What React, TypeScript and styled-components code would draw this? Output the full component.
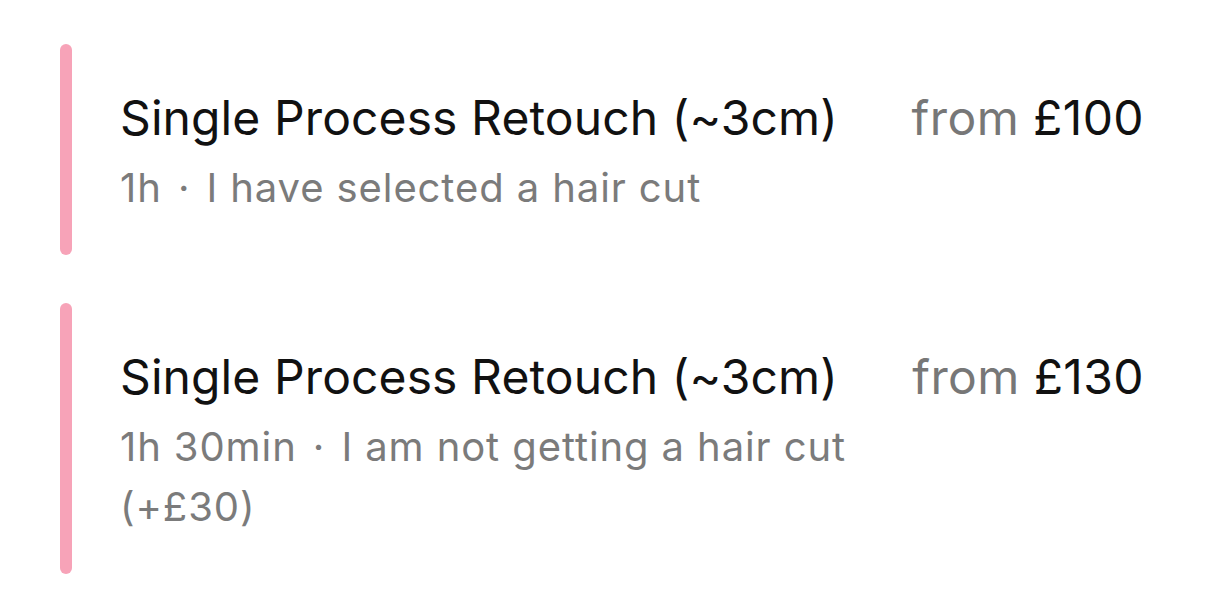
import React from 'react';
import styled, { createGlobalStyle } from 'styled-components';

const GlobalStyle = createGlobalStyle`
  body {
    margin: 0;
    background: #ffffff;
    font-family: Inter, 'Noto Sans', sans-serif;
  }
`;

const List = styled.div`
  display: flex;
  flex-direction: column;
  gap: 48px;
  padding: 44px 62px 28px 60px;
`;

const Item = styled.div`
  display: flex;
  gap: 48px;
`;

const Bar = styled.div`
  width: 12px;
  border-radius: 6px;
  background: #f7a3b8;
  flex-shrink: 0;
`;

const Content = styled.div`
  flex: 1;
  padding: 45px 0 37px;
`;

const TopRow = styled.div`
  display: flex;
  justify-content: space-between;
  align-items: baseline;
`;

const Title = styled.div`
  font-size: 48px;
  line-height: 58px;
  color: #111111;
  letter-spacing: 0.1px;
`;

const Price = styled.div`
  font-size: 48px;
  line-height: 58px;
  color: #111111;
  letter-spacing: 0.4px;
`;

const From = styled.span`
  color: #777777;
`;

const Sub = styled.div`
  max-width: 790px;
  margin-top: 11px;
  font-size: 40px;
  line-height: 60px;
  color: #7b7b7b;
  letter-spacing: 0.9px;
`;

const Dot = styled.span`
  padding: 0 4px;
`;

const Extra = styled.span`
  white-space: nowrap;
`;

const services = [
  { title: 'Single Process Retouch (~3cm)', price: '£100', time: '1h', note: 'I have selected a hair cut', extra: '' },
  { title: 'Single Process Retouch (~3cm)', price: '£130', time: '1h 30min', note: 'I am not getting a hair cut', extra: '(+£30)' },
];

const App = () => {
  return (
    <>
      <GlobalStyle />
      <List>
        {services.map((s, i) => (
          <Item key={i}>
            <Bar />
            <Content>
              <TopRow>
                <Title>{s.title}</Title>
                <Price>
                  <From>from</From> {s.price}
                </Price>
              </TopRow>
              <Sub>
                {s.time} <Dot>·</Dot> {s.note}
                {s.extra && <> <Extra>{s.extra}</Extra></>}
              </Sub>
            </Content>
          </Item>
        ))}
      </List>
    </>
  );
};

export default App;
